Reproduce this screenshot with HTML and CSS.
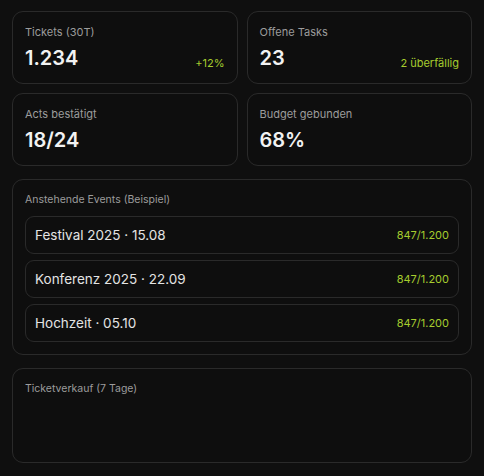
FILE: index.html
```html
<!DOCTYPE html>
<html lang="de">
<head>
    <meta charset="UTF-8">
    <meta name="viewport" content="width=device-width, initial-scale=1.0">
    <title>Dashboard</title>
    <link rel="stylesheet" href="styles.css">
</head>
<body>
    <div class="dashboard">
        <div class="stats">
            <div class="card stat">
                <div class="label">Tickets (30T)</div>
                <div class="stat-row">
                    <span class="value">1.234</span>
                    <span class="hint">+12%</span>
                </div>
            </div>
            <div class="card stat">
                <div class="label">Offene Tasks</div>
                <div class="stat-row">
                    <span class="value">23</span>
                    <span class="hint">2 überfällig</span>
                </div>
            </div>
            <div class="card stat">
                <div class="label">Acts bestätigt</div>
                <div class="stat-row">
                    <span class="value">18/24</span>
                </div>
            </div>
            <div class="card stat">
                <div class="label">Budget gebunden</div>
                <div class="stat-row">
                    <span class="value">68%</span>
                </div>
            </div>
        </div>

        <div class="card events">
            <div class="label small">Anstehende Events (Beispiel)</div>
            <div class="event-list">
                <div class="event">
                    <span>Festival 2025 · 15.08</span>
                    <span class="hint">847/1.200</span>
                </div>
                <div class="event">
                    <span>Konferenz 2025 · 22.09</span>
                    <span class="hint">847/1.200</span>
                </div>
                <div class="event">
                    <span>Hochzeit · 05.10</span>
                    <span class="hint">847/1.200</span>
                </div>
            </div>
        </div>

        <div class="card chart">
            <div class="label small">Ticketverkauf (7 Tage)</div>
        </div>
    </div>
</body>
</html>
```

FILE: styles.css
```css
body {
    margin: 0;
    padding: 11px 12px 13px 12px;
    background-color: #0f0f0f;
    font-family: Inter, "Noto Sans", sans-serif;
    color: #ececec;
}

.dashboard {
    display: flex;
    flex-direction: column;
    gap: 13px;
}

.stats {
    display: grid;
    grid-template-columns: 1fr 1fr;
    gap: 9px;
}

.card {
    background-color: #0e0e0e;
    border: 1px solid #2a2a2a;
    border-radius: 11px;
    padding: 12px;
}

.label {
    font-size: 11px;
    line-height: 16px;
    color: #9c9c9c;
}

.label.small {
    font-size: 10.5px;
}

.stat-row {
    display: flex;
    justify-content: space-between;
    align-items: flex-end;
    margin-top: 6px;
}

.value {
    font-size: 20px;
    line-height: 25px;
    font-weight: 600;
    color: #f2f2f2;
}

.hint {
    font-size: 11px;
    line-height: 16px;
    color: #a6cc2e;
}

.event-list {
    display: flex;
    flex-direction: column;
    gap: 6px;
    margin-top: 8px;
}

.event {
    display: flex;
    justify-content: space-between;
    align-items: center;
    height: 36px;
    padding: 0 9px;
    border: 1px solid #2a2a2a;
    border-radius: 9px;
    font-size: 13.5px;
    color: #e4e4e4;
}

.chart {
    min-height: 69px;
}
```
